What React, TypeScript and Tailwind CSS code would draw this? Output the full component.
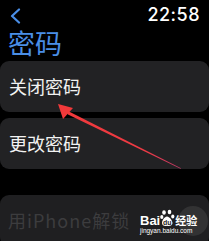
import React from "react";

const cjk = { fontFamily: '"Noto Sans CJK SC", "Noto Sans", sans-serif' };

export default function App() {
  return (
    <div className="relative w-[209px] h-[241px] bg-black overflow-hidden" style={cjk}>
      <div className="flex items-start justify-between pl-[10px] pr-[9px] pt-[6px] h-[26px]">
        <svg width="11" height="16" viewBox="0 0 11 16" className="mt-[2px]">
          <polyline points="9,1.5 2,8 9,14.5" fill="none" stroke="#4a8ee6" strokeWidth="2.2" strokeLinecap="round" strokeLinejoin="round" />
        </svg>
        <span className="text-[18px] leading-[18px] font-medium text-white tracking-[0.5px]" style={{ fontFamily: '"Inter", "Noto Sans", sans-serif' }}>22:58</span>
      </div>
      <div className="pl-[8px] text-[27px] leading-[34px] text-[#4a8ee6] h-[35px]">密码</div>
      <div className="flex flex-col">
        <div className="h-[51px] rounded-[9px] bg-[#222224] flex items-center pl-[9px] text-[18px] text-[#f2f2f2]">关闭密码</div>
        <div className="h-[51px] rounded-[9px] bg-[#222224] flex items-center pl-[9px] text-[18px] text-[#f2f2f2] mt-[6px]">更改密码</div>
        <div className="h-[51px] rounded-[9px] bg-[#1f1f21] flex items-center pl-[8px] text-[18px] text-[#3c3c3e] mt-[26px] tracking-[1px]">用iPhone解锁</div>
      </div>

      {/* red arrow */}
      <svg className="absolute left-0 top-0" width="209" height="241" viewBox="0 0 209 241">
        <defs>
          <linearGradient id="g" x1="60" y1="105" x2="182" y2="169" gradientUnits="userSpaceOnUse">
            <stop offset="0" stopColor="#f2393a" />
            <stop offset="0.7" stopColor="#ee3a44" />
            <stop offset="1" stopColor="#c23a6a" />
          </linearGradient>
        </defs>
        <polygon points="66,110 68,114.5 181,169 180.5,168" fill="url(#g)" />
        <polygon points="58,104 73,108 63,119" fill="#f2393a" />
      </svg>

      {/* watermark */}
      <div className="absolute left-[178px] top-[206px] w-[30px] h-[30px] rounded-full bg-[#3a3a3c] opacity-70" />
      <div className="absolute left-[140px] top-[208px] flex flex-col items-start">
        <div className="flex items-end h-[20px]">
          <span className="text-[13px] leading-[13px] font-bold text-white mb-[1px]" style={{ fontFamily: '"Liberation Sans", Arial, sans-serif' }}>Bai</span>
          <svg width="15" height="19" viewBox="0 0 15 19">
            <ellipse cx="4" cy="3.5" rx="1.8" ry="2.3" fill="#fff" />
            <ellipse cx="9.5" cy="3" rx="1.8" ry="2.3" fill="#fff" />
            <ellipse cx="1.8" cy="8" rx="1.6" ry="2" fill="#fff" />
            <ellipse cx="12.8" cy="7.5" rx="1.6" ry="2" fill="#fff" />
            <path d="M7,7.5 C4,8 2.2,11.5 2,14 C2,16.5 4.5,17.5 7,16.8 C9.5,17.5 12.5,16.5 12.5,14 C12.3,11.5 10,8 7,7.5 Z" fill="#fff" />
            <text x="7.3" y="15.6" fontSize="7" fontWeight="bold" textAnchor="middle" fill="#222" fontFamily="Liberation Sans, Arial, sans-serif">du</text>
          </svg>
          <span className="text-[11px] leading-[13px] font-bold text-white mb-[1px]">经验</span>
        </div>
        <span className="text-[6.5px] leading-[8px] text-white -mt-[1px]" style={{ fontFamily: '"Liberation Sans", Arial, sans-serif' }}>jingyan.baidu.com</span>
      </div>
    </div>
  );
}
